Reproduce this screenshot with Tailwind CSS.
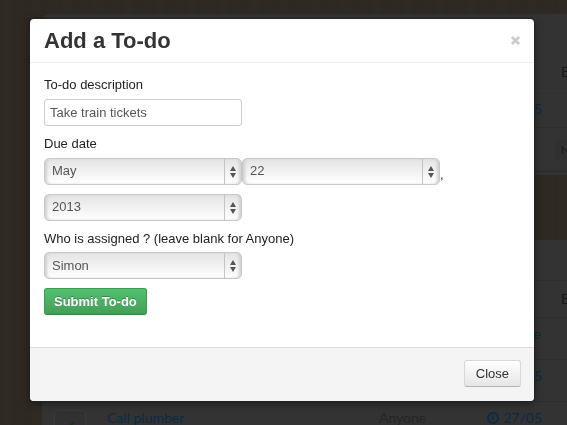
<!DOCTYPE html>
<html lang="en">
<head>
<meta charset="utf-8">
<meta name="viewport" content="width=device-width, initial-scale=1">
<title>Add a To-do</title>
<script src="https://cdn.jsdelivr.net/npm/@tailwindcss/browser@4"></script>
</head>
<body class="h-screen overflow-hidden bg-[#2d2822] font-['Liberation_Sans',Arial,sans-serif] text-[13px] leading-5 text-[#222]">

<!-- Dimmed to-do lists under the dialog -->
<main aria-hidden="true" class="h-screen overflow-hidden bg-[repeating-linear-gradient(90deg,#2e2923_0px,#302a23_7px,#2d2822_13px,#2f2922_22px,#2e2822_31px)] pt-3.5 pl-[42px] font-['Lato','Liberation_Sans',sans-serif] text-[14px] text-[#151a1d]">
  <section class="-mr-14 rounded-t-md bg-[#333]">
    <div class="h-10 border-b border-[#3d302f]"></div>
    <div class="flex h-[37px] items-center justify-end border-b border-[#3a3434]"><span class="w-[62px]">E</span></div>
    <div class="flex h-[37px] items-center justify-end border-b border-[#2d2d2d] pr-[81px] text-[#0a2c42]">5</div>
    <div class="flex h-11 items-center justify-end border-b border-[#292929]"><span class="w-[68px] rounded-sm bg-[#303030] px-1.5 text-[11px] leading-5">N</span></div>
    <div class="h-1 border-b border-[#292929]"></div>
  </section>
  <section class="mt-[64px] -mr-14 bg-[#333]">
    <div class="h-[41px] border-b border-[#2d2d2d]"></div>
    <div class="flex h-[37px] items-center justify-end border-b border-[#2d2d2d]"><span class="w-[62px]">E</span></div>
    <div class="flex h-[42px] items-start justify-end border-b border-[#2d2d2d] pt-1.5 pr-[82px] text-[#0a2c42]">e</div>
    <div class="flex h-[42px] items-start justify-end border-b border-[#2d2d2d] pt-1.5 pr-[81px] text-[#0a2c42]">5</div>
    <div class="flex h-[42px] text-[#0a2c42]">
      <div class="flex w-[57px] border-r-4 border-double border-[#3c2f2f] pt-2 pl-3">
        <div class="flex h-7 w-8 justify-center rounded-sm border border-[#3a3a3a] bg-[#313131] pt-2">
          <svg class="size-3" viewBox="0 0 12 12" fill="none" stroke="#1d2e20" stroke-width="2"><path d="M2 6.5 4.5 9 9.5 3"/></svg>
        </div>
      </div>
      <div class="flex grow items-start justify-between pt-1.5 pr-[81px] pl-2">
        <span class="w-[272px]">Call plumber</span>
        <span class="w-[108px] text-[#252525]">Anyone</span>
        <span class="flex grow items-center justify-end gap-1">
          <svg class="size-3" viewBox="0 0 12 12" fill="none" stroke="#0a2c42" stroke-width="2"><circle cx="6" cy="6" r="5"/><path stroke-width="1.5" d="M6.3 3v3.7H4"/></svg>
          27/05
        </span>
      </div>
    </div>
  </section>
</main>

<!-- Dialog -->
<div class="fixed inset-0 pt-[19px] pr-[33px] pl-[30px]">
  <div role="dialog" aria-modal="true" aria-labelledby="dialog-title" class="rounded-[4px] bg-white shadow-[0_0_0_1px_#222,0_2px_8px_rgba(0,0,0,0.5)]">
    <header class="flex h-11 items-center justify-between border-b border-[#eee] px-3.5">
      <h3 id="dialog-title" class="text-[22px] leading-7 font-bold text-[#333]">Add a To-do</h3>
      <button type="button" aria-label="Close dialog" class="text-[#ccc]">
        <svg class="size-[9px]" viewBox="0 0 9 9" fill="none" stroke="currentColor" stroke-width="2.8"><path d="M.9.9 8.1 8.1M8.1.9.9 8.1"/></svg>
      </button>
    </header>

    <form>
      <div class="px-3.5 pt-3 pb-8">
        <label for="description" class="block">To-do description</label>
        <input id="description" type="text" value="Take train tickets" class="mt-1 block h-[27px] w-[198px] rounded-[3px] border border-[#ccc] px-[5px] text-[#555]">

        <label for="month" class="mt-2 block">Due date</label>
        <div class="mt-1 flex flex-wrap items-end gap-y-[9px]">
          <span class="relative w-[198px]">
            <select id="month" class="block h-[27px] w-full appearance-none rounded-[5px] border border-[#c8c8c8] bg-linear-to-b from-[#e4e4e4] to-white pr-5 pb-0.5 pl-[7px] text-[#555] shadow-[inset_3px_0_3px_-1px_#d0d0d0,inset_-3px_0_3px_-1px_#d0d0d0]"><option>May</option></select>
            <span class="pointer-events-none absolute inset-y-px right-0 flex w-[18px] items-center border-l border-[#c4c4c4] pl-[5px]"><svg class="h-3 w-[6px]" viewBox="0 0 6 12" fill="#555"><path d="M3 0 6 5H0zM0 7h6L3 12z"/></svg></span>
          </span>
          <span class="relative w-[198px]">
            <select aria-label="Day" class="block h-[27px] w-full appearance-none rounded-[5px] border border-[#c8c8c8] bg-linear-to-b from-[#e4e4e4] to-white pr-5 pb-0.5 pl-[7px] text-[#555] shadow-[inset_3px_0_3px_-1px_#d0d0d0,inset_-3px_0_3px_-1px_#d0d0d0]"><option>22</option></select>
            <span class="pointer-events-none absolute inset-y-px right-0 flex w-[18px] items-center border-l border-[#c4c4c4] pl-[5px]"><svg class="h-3 w-[6px]" viewBox="0 0 6 12" fill="#555"><path d="M3 0 6 5H0zM0 7h6L3 12z"/></svg></span>
          </span>
          <span class="grow">,</span>
          <span class="relative w-[198px]">
            <select aria-label="Year" class="block h-[27px] w-full appearance-none rounded-[5px] border border-[#c8c8c8] bg-linear-to-b from-[#e4e4e4] to-white pr-5 pb-0.5 pl-[7px] text-[#555] shadow-[inset_3px_0_3px_-1px_#d0d0d0,inset_-3px_0_3px_-1px_#d0d0d0]"><option>2013</option></select>
            <span class="pointer-events-none absolute inset-y-px right-0 flex w-[18px] items-center border-l border-[#c4c4c4] pl-[5px]"><svg class="h-3 w-[6px]" viewBox="0 0 6 12" fill="#555"><path d="M3 0 6 5H0zM0 7h6L3 12z"/></svg></span>
          </span>
        </div>

        <label for="assignee" class="mt-2 block">Who is assigned ? (leave blank for Anyone)</label>
        <div class="relative mt-[3px] w-[198px]">
          <select id="assignee" class="block h-[27px] w-full appearance-none rounded-[5px] border border-[#c8c8c8] bg-linear-to-b from-[#e4e4e4] to-white pr-5 pl-[7px] text-[#555] shadow-[inset_3px_0_3px_-1px_#d0d0d0,inset_-3px_0_3px_-1px_#d0d0d0]"><option>Simon</option></select>
          <span class="pointer-events-none absolute inset-y-px right-0 flex w-[18px] items-center border-l border-[#c4c4c4] pl-[5px]"><svg class="h-3 w-[6px]" viewBox="0 0 6 12" fill="#555"><path d="M3 0 6 5H0zM0 7h6L3 12z"/></svg></span>
        </div>

        <button type="submit" class="mt-[9px] block h-[27px] rounded-[3px] border border-[#3d9a52] border-b-[#338544] bg-linear-to-b from-[#54c070] to-[#429f57] px-[9px] font-bold text-white text-shadow-[0_-1px_0_rgba(0,0,0,0.25)]">Submit To-do</button>
      </div>

      <footer class="flex justify-end rounded-b-[4px] border-t border-[#ddd] bg-[#f4f4f4] px-[13px] pt-3 pb-3.5">
        <button type="button" class="h-[27px] rounded-[3px] border border-[#d8d8d8] border-b-[#b3b3b3] bg-linear-to-b from-white to-[#e6e6e6] px-[11px] text-[#333]">Close</button>
      </footer>
    </form>
  </div>
</div>
</body>
</html>
